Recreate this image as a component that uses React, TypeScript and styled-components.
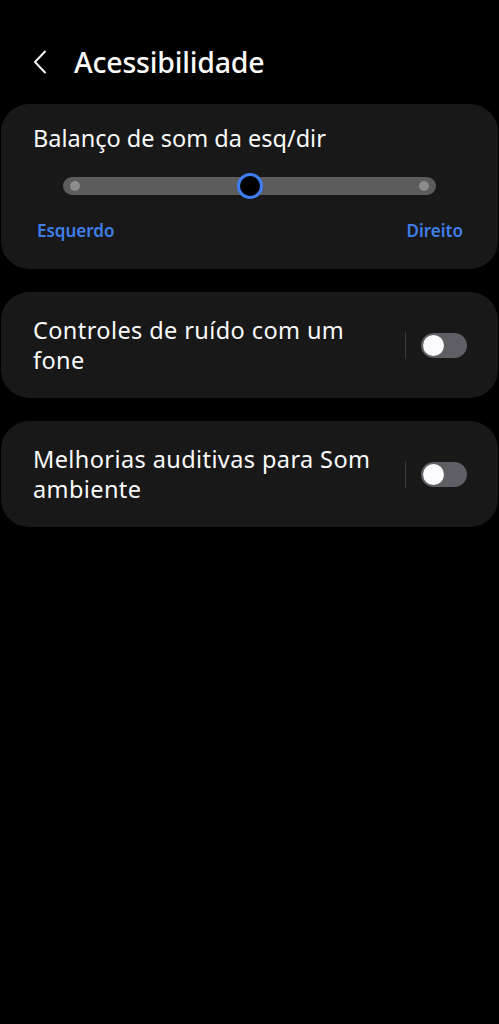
import React from "react";
import styled, { createGlobalStyle } from "styled-components";

const GlobalStyle = createGlobalStyle`
  html, body {
    margin: 0;
    padding: 0;
    background: #000;
  }
  body {
    font-family: "Noto Sans", "Open Sans", sans-serif;
    color: #fafafa;
  }
`;

const Page = styled.div`
  width: 499px;
  min-height: 1024px;
  background: #000;
  display: flex;
  flex-direction: column;
`;

const Header = styled.div`
  display: flex;
  align-items: center;
  height: 56px;
  padding: 34px 0 0 28px;
  margin-bottom: 14px;
`;

const BackButton = styled.div`
  width: 24px;
  height: 28px;
  display: flex;
  align-items: center;
  justify-content: center;
  margin-right: 22px;
`;

const Title = styled.h1`
  margin: 0;
  font-size: 28.5px;
  font-weight: 500;
  letter-spacing: -0.2px;
  color: #fafafa;
`;

const List = styled.div`
  display: flex;
  flex-direction: column;
  gap: 23px;
  padding: 0 1px;
`;

const Card = styled.div`
  background: #181818;
  border-radius: 28px;
`;

const BalanceCard = styled(Card)`
  padding: 19px 35px 26px 32px;
`;

const CardTitle = styled.div`
  font-size: 23.5px;
  line-height: 30px;
  color: #fafafa;
`;

const SliderArea = styled.div`
  position: relative;
  margin: 24px 27px 0 30px;
  height: 18px;
  border-radius: 9px;
  background: #5c5c5c;
`;

const EndDot = styled.div<{ $side: "left" | "right" }>`
  position: absolute;
  top: 4px;
  ${(p) => (p.$side === "left" ? "left: 7px;" : "right: 7px;")}
  width: 10px;
  height: 10px;
  border-radius: 50%;
  background: #8c8c8c;
`;

const Thumb = styled.div`
  position: absolute;
  top: 50%;
  left: 50%;
  width: 20px;
  height: 20px;
  transform: translate(-50%, -50%);
  border-radius: 50%;
  border: 3px solid #3f7ef0;
  background: #000;
`;

const Labels = styled.div`
  display: flex;
  justify-content: space-between;
  margin: 24px 0 0 4px;
  font-size: 17px;
  line-height: 24px;
  font-weight: 600;
  color: #3f7ee8;
`;

const SwitchCard = styled(Card)`
  display: flex;
  align-items: center;
  padding: 23px 31px 23px 32px;
`;

const SwitchText = styled.div`
  flex: 1;
  font-size: 23.5px;
  line-height: 30px;
  letter-spacing: 0.4px;
  color: #fafafa;
  padding-right: 28px;
`;

const Divider = styled.div`
  width: 1px;
  height: 27px;
  background: #3a3a3a;
  margin-right: 15px;
`;

const Toggle = styled.div`
  width: 46px;
  height: 25px;
  border-radius: 13px;
  background: #5f5e64;
  display: flex;
  align-items: center;
  padding-left: 2px;
  box-sizing: border-box;
`;

const Knob = styled.div`
  width: 21px;
  height: 21px;
  border-radius: 50%;
  background: #fbfbfd;
`;

const SwitchRow = ({ label }: { label: string }) => (
  <SwitchCard>
    <SwitchText>{label}</SwitchText>
    <Divider />
    <Toggle>
      <Knob />
    </Toggle>
  </SwitchCard>
);

export default function App() {
  return (
    <Page>
      <GlobalStyle />
      <Header>
        <BackButton>
          <svg width="14" height="24" viewBox="0 0 14 24" fill="none">
            <path
              d="M12 1.5 L2 12 L12 22.5"
              stroke="#f2f2f2"
              strokeWidth="2"
              strokeLinecap="round"
              strokeLinejoin="round"
            />
          </svg>
        </BackButton>
        <Title>Acessibilidade</Title>
      </Header>
      <List>
        <BalanceCard>
          <CardTitle>Balanço de som da esq/dir</CardTitle>
          <SliderArea>
            <EndDot $side="left" />
            <EndDot $side="right" />
            <Thumb />
          </SliderArea>
          <Labels>
            <span>Esquerdo</span>
            <span>Direito</span>
          </Labels>
        </BalanceCard>
        <SwitchRow label="Controles de ruído com um fone" />
        <SwitchRow label="Melhorias auditivas para Som ambiente" />
      </List>
    </Page>
  );
}
